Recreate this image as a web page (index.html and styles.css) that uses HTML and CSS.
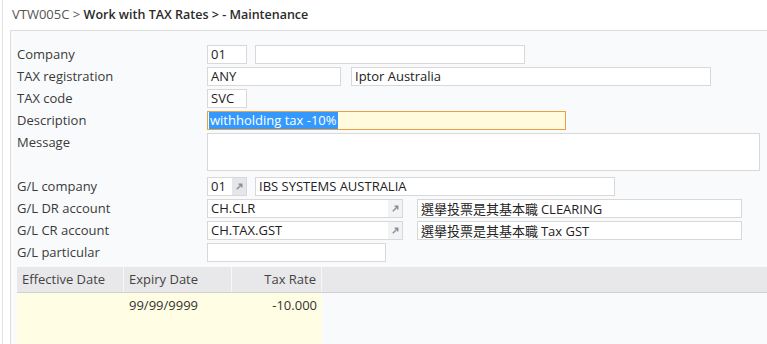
FILE: index.html
```html
<!DOCTYPE html>
<html>
<head>
    <link rel="stylesheet" href="styles.css">
</head>
<body>
    <div class="frame">
        <div class="title"><span class="prog">VTW005C &gt;</span> <span class="crumb">Work with TAX Rates &gt; - Maintenance</span></div>

        <div class="panel">
            <div class="row">
                <div class="label">Company</div>
                <div class="field w40">01</div>
                <div class="field w270 gap"></div>
            </div>
            <div class="row">
                <div class="label">TAX registration</div>
                <div class="field w134">ANY</div>
                <div class="field w360 gap2">Iptor Australia</div>
            </div>
            <div class="row">
                <div class="label">TAX code</div>
                <div class="field w40">SVC</div>
            </div>
            <div class="row">
                <div class="label">Description</div>
                <div class="field w359 active"><span class="sel">withholding tax -10%</span></div>
            </div>
            <div class="row tall">
                <div class="label">Message</div>
                <div class="field area"></div>
            </div>
            <div class="row">
                <div class="label">G/L company</div>
                <div class="field w40 prompt"><span class="val">01</span><span class="btn dark"><svg viewBox="0 0 10 10"><path d="M2 8 L7.5 2.5 M4 2.5 H7.5 V6" stroke="#8a8f96" stroke-width="1.6" fill="none"/></svg></span></div>
                <div class="field w360 gap">IBS SYSTEMS AUSTRALIA</div>
            </div>
            <div class="row">
                <div class="label">G/L DR account</div>
                <div class="field w196 prompt"><span class="val">CH.CLR</span><span class="btn"><svg viewBox="0 0 10 10"><path d="M2 8 L7.5 2.5 M4 2.5 H7.5 V6" stroke="#8a8f96" stroke-width="1.6" fill="none"/></svg></span></div>
                <div class="field w325 gap3 cjk">選擧投票是其基本職 <span class="lat">CLEARING</span></div>
            </div>
            <div class="row">
                <div class="label">G/L CR account</div>
                <div class="field w196 prompt"><span class="val">CH.TAX.GST</span><span class="btn"><svg viewBox="0 0 10 10"><path d="M2 8 L7.5 2.5 M4 2.5 H7.5 V6" stroke="#8a8f96" stroke-width="1.6" fill="none"/></svg></span></div>
                <div class="field w325 gap3 cjk">選擧投票是其基本職 <span class="lat">Tax GST</span></div>
            </div>
            <div class="row">
                <div class="label">G/L particular</div>
                <div class="field w179"></div>
            </div>

            <div class="grid">
                <div class="grid-head">
                    <div class="col c1">Effective Date</div>
                    <div class="col c2">Expiry Date</div>
                    <div class="col c3 num">Tax Rate</div>
                </div>
                <div class="grid-body">
                    <div class="grid-row">
                        <div class="col c1"></div>
                        <div class="col c2">99/99/9999</div>
                        <div class="col c3 num">-10.000</div>
                    </div>
                    <div class="grid-row">
                        <div class="col c1"></div>
                        <div class="col c2"></div>
                        <div class="col c3 num"></div>
                    </div>
                    <div class="grid-row">
                        <div class="col c1"></div>
                        <div class="col c2"></div>
                        <div class="col c3 num"></div>
                    </div>
                </div>
            </div>
        </div>
    </div>
</body>
</html>
```

FILE: styles.css
```css
body {
    margin: 0;
    padding: 0;
    background: #ffffff;
    font-family: "Open Sans", "Noto Sans", sans-serif;
    font-size: 13px;
    color: #333;
    overflow: hidden;
}

.frame {
    margin-left: 2px;
    border-left: 1px solid #e2e2e2;
    min-height: 344px;
}

.title {
    height: 30px;
    padding-left: 9px;
    line-height: 28px;
    font-size: 13px;
    white-space: nowrap;
}

.prog {
    color: #555;
}

.crumb {
    color: #2b2b2b;
    font-weight: 600;
    font-size: 12.5px;
}

.panel {
    margin-left: 7px;
    width: 820px;
    border: 1px solid #dcdcdc;
    border-right: none;
    background: #f9fafc;
    padding: 13px 0 0 6px;
}

.row {
    display: flex;
    align-items: flex-start;
    height: 22px;
}

.row.tall {
    height: 44px;
}

.label {
    width: 190px;
    color: #3a3a3a;
    line-height: 20px;
    white-space: nowrap;
}

.field {
    box-sizing: border-box;
    height: 19px;
    margin-top: 1px;
    padding: 0 3px;
    background: #fff;
    border: 1px solid #d8d8d8;
    line-height: 17px;
    white-space: nowrap;
    overflow: hidden;
    color: #222;
}

.gap { margin-left: 8px; }
.gap2 { margin-left: 10px; }
.gap3 { margin-left: 14px; }

.w40 { width: 40px; }
.w134 { width: 134px; }
.w179 { width: 179px; }
.w196 { width: 196px; }
.w270 { width: 270px; }
.w325 { width: 325px; }
.w359 { width: 359px; }
.w360 { width: 360px; }

.area {
    width: 553px;
    height: 38px;
}

.active {
    background: #fffbdc;
    border-color: #eea040;
    padding-left: 1px;
}

.sel {
    background: #3399ff;
    color: #fff;
    display: inline-block;
    line-height: 17px;
    padding: 0 1px;
}

.prompt {
    display: flex;
    padding-right: 0;
}

.prompt .val {
    flex: 1;
}

.btn {
    width: 14px;
    height: 17px;
    background: #f2f3f5;
    display: flex;
    align-items: center;
    justify-content: center;
}

.btn.dark {
    background: #e4e6ea;
}

.btn svg {
    width: 9px;
    height: 9px;
}

.cjk {
    font-family: "Noto Sans CJK TC", "Open Sans", sans-serif;
    font-size: 13px;
}

.lat {
    font-family: "Open Sans", sans-serif;
}

.grid {
    margin-top: 3px;
}

.grid-head {
    display: flex;
    height: 25px;
    background: #e8e8ea;
    border-bottom: 1px solid #d0d0d0;
    color: #444;
}

.grid-head .col {
    border-right: 1px solid #f7f7f7;
    line-height: 25px;
}

.col {
    box-sizing: border-box;
    padding: 0 5px;
    white-space: nowrap;
}

.c1 { width: 107px; }
.c2 { width: 108px; }
.c3 { width: 90px; }

.num {
    text-align: right;
}

.grid-row {
    display: flex;
    height: 24px;
}

.grid-row .col {
    background: #fffde3;
    line-height: 24px;
    color: #333;
}
```
